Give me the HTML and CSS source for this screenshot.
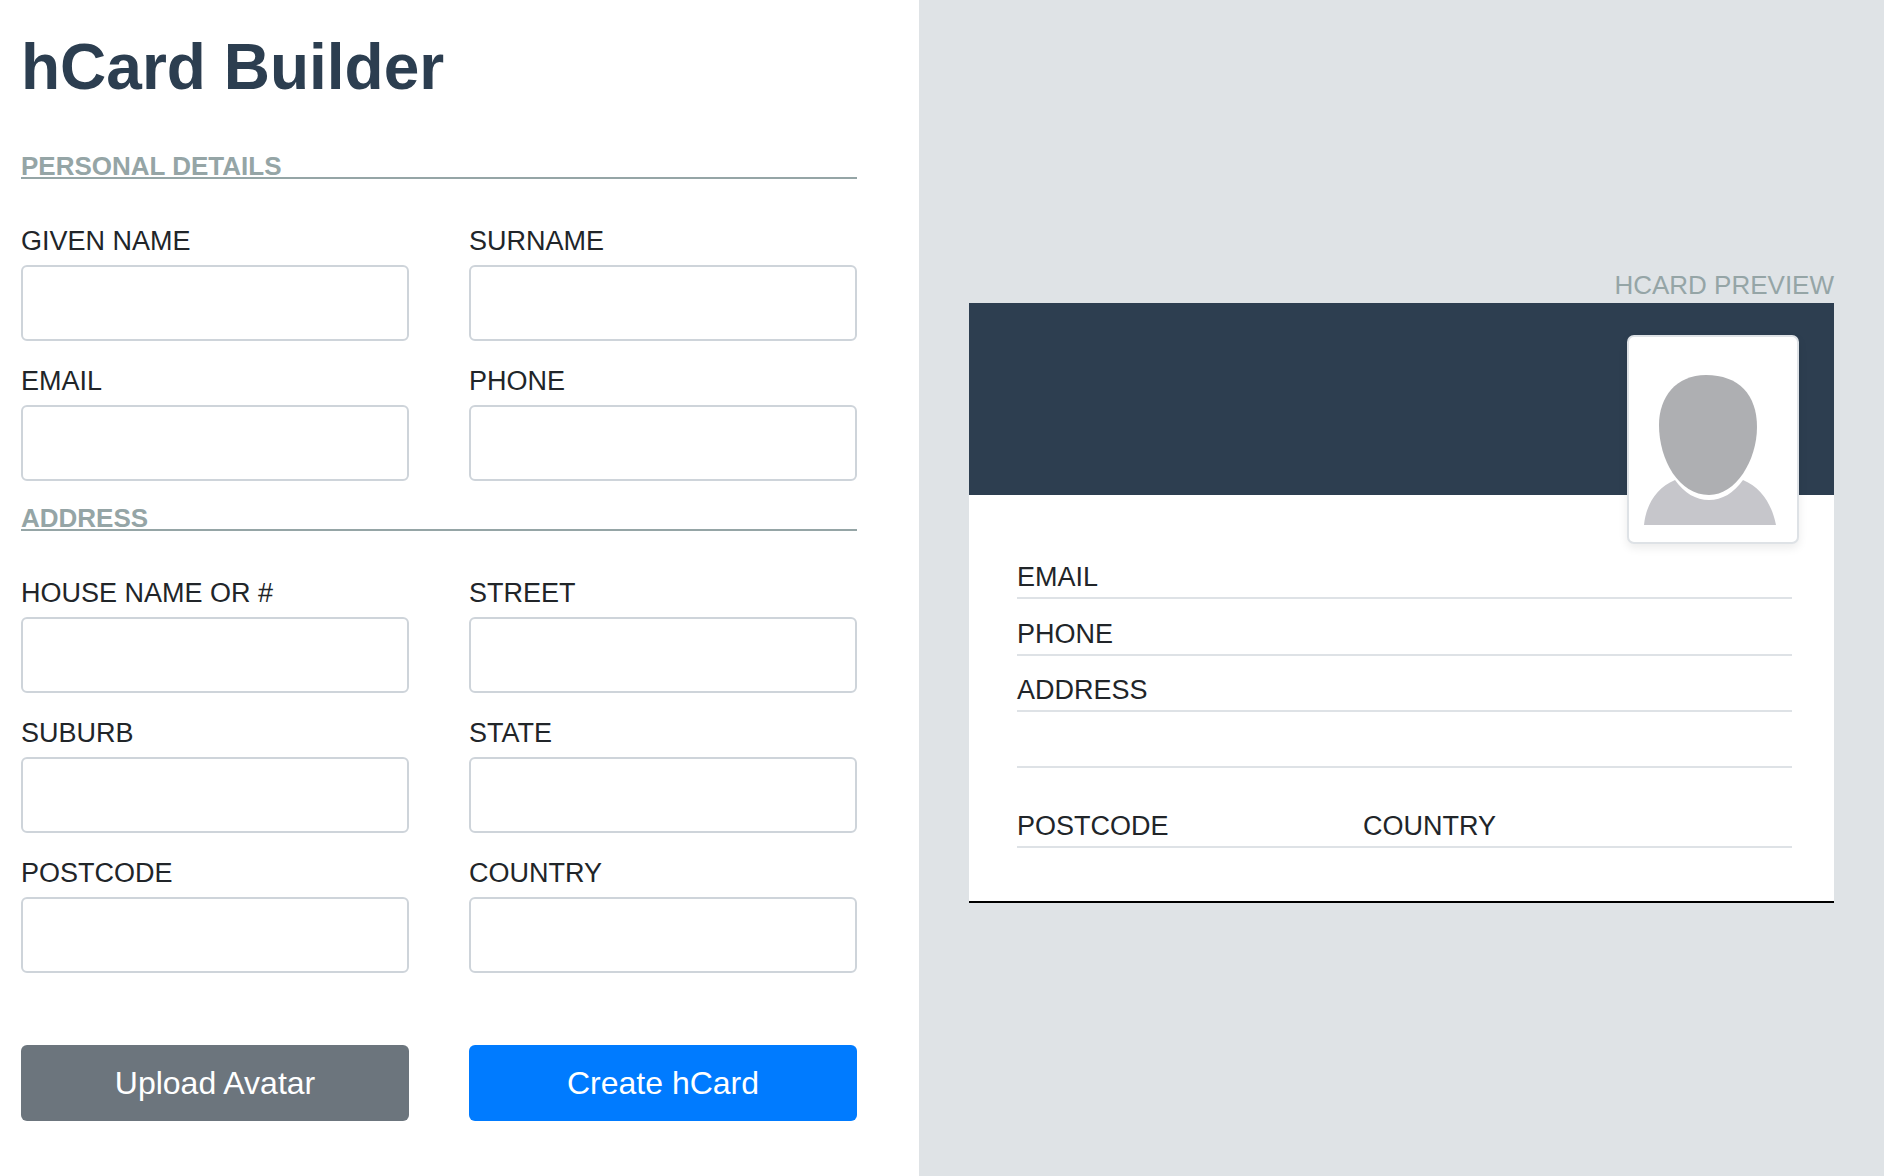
FILE: index.html
```html
<!DOCTYPE html>
<html lang="en">
<head>
  <meta charset="UTF-8">
  <meta name="viewport" content="width=device-width, initial-scale=1.0">
  <title>hCard Builder</title>
  <link rel="stylesheet" href="styles.css">
</head>
<body>

  <div class="page">

    <!-- form side -->
    <main class="builder">
      <h1 class="builder-title">hCard Builder</h1>

      <form>
        <h2 class="section-title">Personal Details</h2>
        <div class="field-grid">
          <div class="field"><label for="given">Given Name</label><input id="given" type="text"></div>
          <div class="field"><label for="surname">Surname</label><input id="surname" type="text"></div>
          <div class="field"><label for="email">Email</label><input id="email" type="text"></div>
          <div class="field"><label for="phone">Phone</label><input id="phone" type="text"></div>
        </div>

        <h2 class="section-title">Address</h2>
        <div class="field-grid">
          <div class="field"><label for="house">House Name or #</label><input id="house" type="text"></div>
          <div class="field"><label for="street">Street</label><input id="street" type="text"></div>
          <div class="field"><label for="suburb">Suburb</label><input id="suburb" type="text"></div>
          <div class="field"><label for="state">State</label><input id="state" type="text"></div>
          <div class="field"><label for="postcode">Postcode</label><input id="postcode" type="text"></div>
          <div class="field"><label for="country">Country</label><input id="country" type="text"></div>
        </div>

        <div class="button-row">
          <button type="button" class="btn btn-upload">Upload Avatar</button>
          <button type="button" class="btn btn-create">Create hCard</button>
        </div>
      </form>
    </main>

    <!-- preview side -->
    <aside class="preview">
      <h2 class="preview-title">hCard Preview</h2>
      <div class="card">
        <div class="card-head">
          <div class="avatar">
            <svg width="132" height="150" viewBox="0 0 132 150" aria-hidden="true">
              <path fill="#c6c6cb" d="M31 105C12 113 2 130 0 150H132C128 130 118 113 99 105C90 118 78 125 65 125C52 125 40 118 31 105Z"/>
              <path fill="#aeafb2" d="M62 0C32 0 15 22 15 50C15 85 35 120 65 120C92 120 113 85 113 52C113 20 95 0 62 0Z"/>
            </svg>
          </div>
        </div>
        <div class="card-body">
          <div class="card-row">Email</div>
          <div class="card-row">Phone</div>
          <div class="card-row">Address</div>
          <div class="card-row"></div>
          <div class="card-row card-row-split">
            <span class="postcode">Postcode</span>
            <span>Country</span>
          </div>
        </div>
      </div>
    </aside>

  </div>

</body>
</html>
```

FILE: styles.css
```css
* {
  box-sizing: border-box;
}

body {
  margin: 0;
  font-family: "Liberation Sans", Arial, sans-serif;
  color: #212529;
}

.page {
  display: flex;
  height: 1176px;
  overflow: hidden;
}

.builder {
  width: 919px;
  padding: 21px 62px 0 21px;
  background: white;
}

.builder-title {
  margin: 0 0 40px;
  font-size: 64px;
  line-height: 92px;
  font-weight: bold;
  color: #2c3e50;
}

.section-title {
  margin: 0 0 46px;
  height: 26px;
  border-bottom: 2px solid #95a5a6;
  font-size: 26px;
  line-height: 26px;
  font-weight: bold;
  color: #95a5a6;
  text-transform: uppercase;
}

.field-grid {
  display: grid;
  grid-template-columns: 388px 388px;
  column-gap: 60px;
}

.field {
  margin-bottom: 24px;
}

.field label {
  display: block;
  height: 40px;
  font-size: 27px;
  line-height: 32px;
  text-transform: uppercase;
}

.field input {
  display: block;
  width: 100%;
  height: 76px;
  border: 2px solid #ced4da;
  border-radius: 6px;
  background: white;
}

.button-row {
  display: grid;
  grid-template-columns: 388px 388px;
  column-gap: 60px;
  margin-top: 48px;
}

.btn {
  height: 76px;
  border: 0;
  border-radius: 6px;
  color: white;
  font-family: "Liberation Sans", Arial, sans-serif;
  font-size: 32px;
}

.btn-upload {
  background: #6c757d;
}

.btn-create {
  background: #007bff;
}

.preview {
  flex: 1;
  padding: 268px 50px 0;
  background: #dfe3e6;
}

.preview-title {
  margin: 0;
  height: 35px;
  font-size: 26px;
  line-height: 35px;
  font-weight: normal;
  color: #95a5a6;
  text-align: right;
  text-transform: uppercase;
}

.card {
  background: white;
  border-bottom: 2px solid black;
}

.card-head {
  position: relative;
  height: 192px;
  background: #2d3e50;
}

.avatar {
  position: absolute;
  top: 32px;
  right: 35px;
  width: 172px;
  height: 209px;
  padding: 38px 0 0 15px;
  background: white;
  border: 2px solid #dee2e6;
  border-radius: 7px;
  box-shadow: 0 4px 10px rgba(0, 0, 0, 0.08);
}

.avatar svg {
  display: block;
}

.card-body {
  padding: 48px 42px 53px 48px;
}

.card-row {
  display: flex;
  align-items: flex-end;
  height: 56.33px;
  padding-bottom: 4px;
  border-bottom: 2px solid #dee2e6;
  font-size: 27px;
  line-height: 32px;
  text-transform: uppercase;
}

.card-row-split {
  height: 80px;
}

.postcode {
  width: 346px;
}
```
